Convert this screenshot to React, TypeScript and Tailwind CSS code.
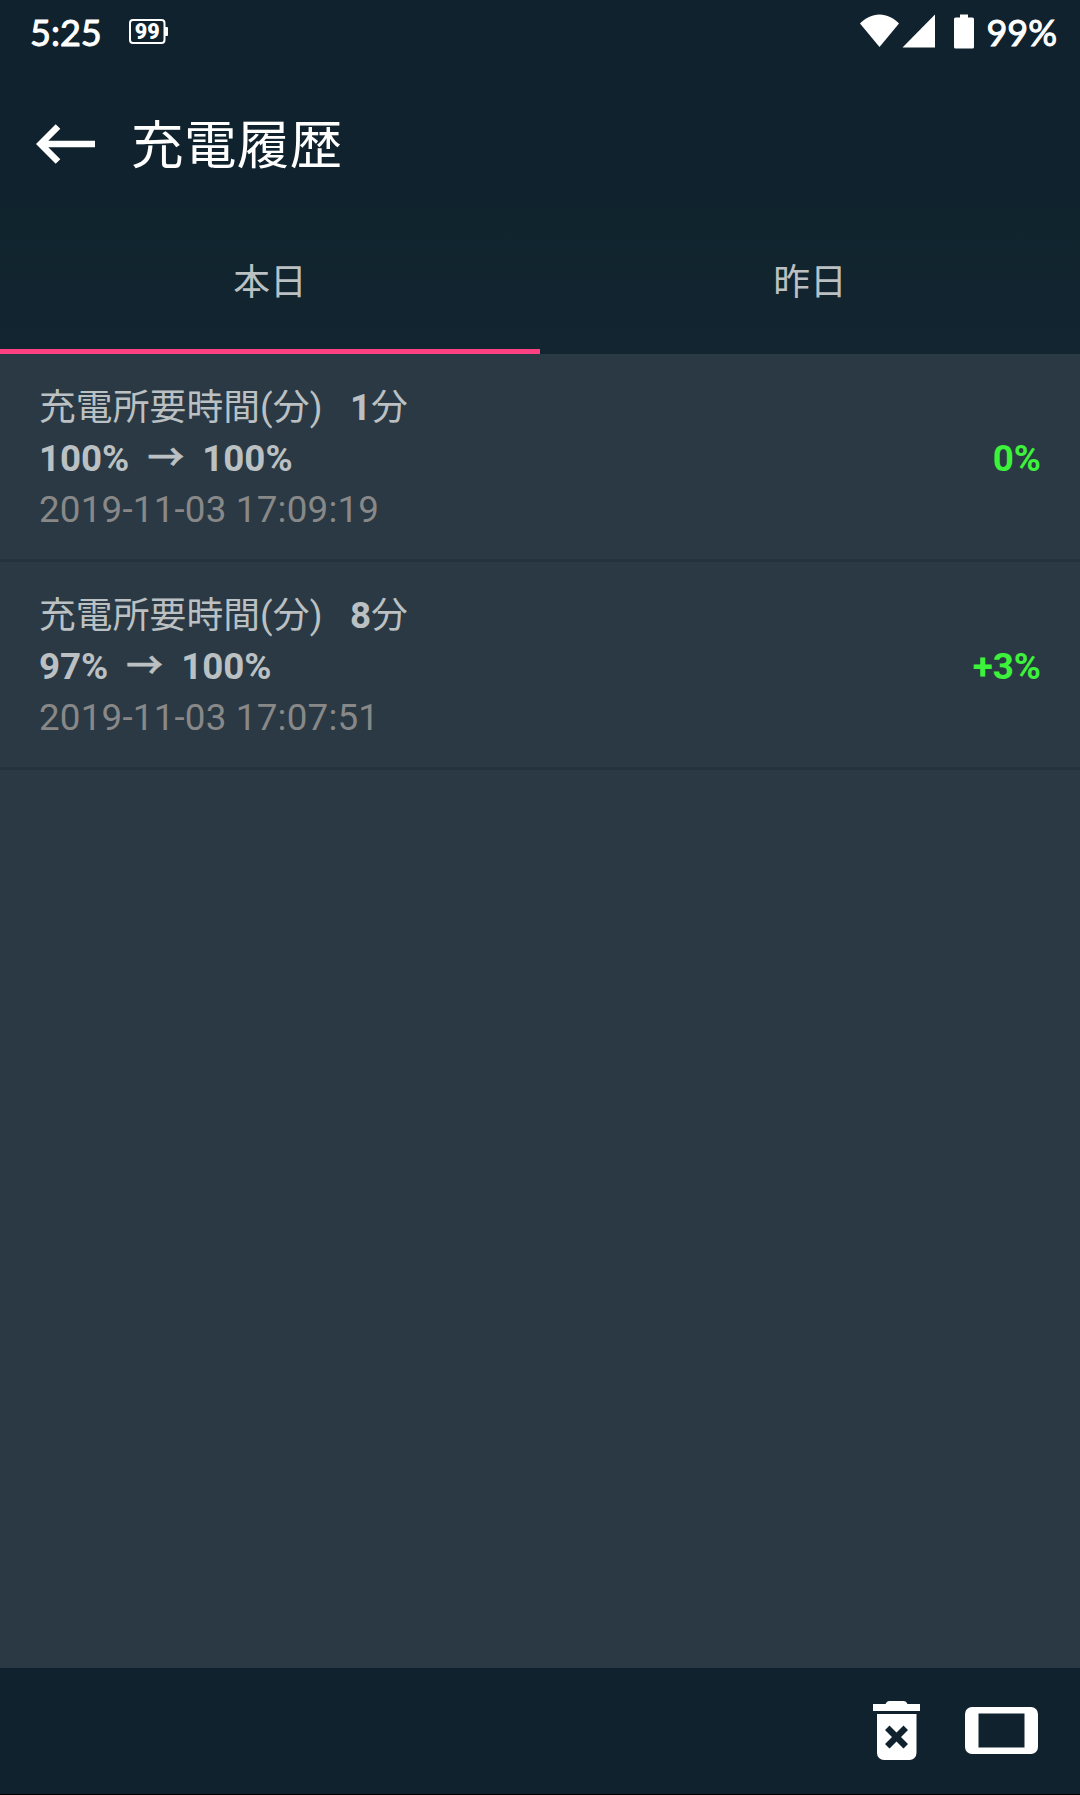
import React from "react";

type Charge = { minutes: string; from: string; to: string; at: string; gain: string };

const charges: Charge[] = [
  { minutes: "1", from: "100%", to: "100%", at: "2019-11-03 17:09:19", gain: "0%" },
  { minutes: "8", from: "97%", to: "100%", at: "2019-11-03 17:07:51", gain: "+3%" },
];

function StatusBar() {
  return (
    <div className="flex h-[63px] items-center justify-between pr-[23px] pl-[30px] font-['Lato',sans-serif] text-[36px] leading-[66px] font-normal text-white [-webkit-text-stroke:1px_white]">
      <div className="flex items-center">
        <span className="w-[99px]">5:25</span>
        <svg className="[-webkit-text-stroke:0]" width="39" height="36" viewBox="0 -5 39 36">
          <rect x="1" y="1" width="34.5" height="23" rx="3" fill="none" stroke="#fff" strokeWidth="2" />
          <rect x="35.500" y="8" width="3.500" height="9" rx="1" fill="#fff" />
          <text x="18.2" y="20" textAnchor="middle" fontFamily="Roboto, sans-serif" fontWeight="900" fontSize="21.5" fill="#fff">99</text>
        </svg>
      </div>
      <div className="flex items-center">
        <svg width="116" height="36" viewBox="0 0 116 36">
          <path d="M0 9.500C5.500 4 12 .500 19.500 .500S33.500 4 39 9.500L19.500 33Z" fill="#fff" />
          <path d="M75 .500V33.500H42.500Z" fill="#fff" />
          <path d="M100 .500h8v3h4.500a1.500 1.500 0 0 1 1.500 1.500v28a1.500 1.500 0 0 1-1.500 1.500h-17a1.500 1.500 0 0 1-1.500-1.500v-28a1.500 1.500 0 0 1 1.500-1.500h4.500z" fill="#fff" />
        </svg>
        <span className="ml-[10px]">99%</span>
      </div>
    </div>
  );
}

function Row({ c }: { c: Charge }) {
  return (
    <li className="flex h-[208px] items-center justify-between border-b-[3px] border-[#23333d] pt-1 pr-[39px] pl-[39px] text-[36.75px] leading-[51px] text-[#bbc0c3]">
      <div className="whitespace-pre">
        <p><span className="tracking-[0.1px]">充電所要時間(分)</span>{"   "}<b className="font-bold">{c.minutes}</b>分</p>
        <p className="font-bold tracking-[-0.05px]">{c.from}{"  "}<span className="font-medium [-webkit-text-stroke:0.7px_#bbc0c3]">→</span>{"  "}{c.to}</p>
        <p className="tracking-[0.2px] text-[#888888]">{c.at}</p>
      </div>
      <span className="font-bold text-[#3df23a]">{c.gain}</span>
    </li>
  );
}

export default function App() {
  return (
    <div lang="ja" className="flex h-[1795px] w-[1080px] flex-col bg-[#2a3943] font-['Roboto','Noto_Sans_CJK_JP',sans-serif]">
      <header className="bg-[#0f222d]">
        <StatusBar />
        <div className="flex h-[144px] items-center pl-[36px] text-white">
          <svg className="mt-[17px]" width="60" height="40" viewBox="0 0 60 40">
            <path d="M59 20H6M22 2.500L4.500 20L22 37.500" fill="none" stroke="#fff" strokeWidth="6.500" />
          </svg>
          <h1 className="ml-[35px] pt-[22px] text-[52.5px] leading-[62px] tracking-[0.4px]">充電履歴</h1>
        </div>
      </header>
      <nav className="grid h-[147px] grid-cols-2 bg-gradient-to-b from-[#10242e] to-[#132530] text-center text-[36.75px] leading-[151px] text-[#bbc0c3]">
        <div className="h-[147px] border-b-[5px] border-[#ff4081]">本日</div>
        <div>昨日</div>
      </nav>
      <ul className="grow">
        {charges.map((c) => (
          <Row key={c.at} c={c} />
        ))}
      </ul>
      <footer className="flex h-[127px] items-start justify-end gap-[45px] border-b border-black bg-[#0f222d] pt-[33px] pr-[42px]">
        <svg width="47" height="60" viewBox="0 0 47 60" fill="#fff">
          <path d="M0 3h12.500c1-2 2-3 4-3h14c2 0 3 1 4 3H47v7H0z" />
          <path fillRule="evenodd" d="M4 13h39.500v39a7 7 0 0 1-7 7h-25.500a7 7 0 0 1-7-7zM16.500 24.500l-4.500 4.500 7 7-7 7 4.500 4.500 7-7 7 7 4.500-4.500-7-7 7-7-4.500-4.500-7 7z" />
        </svg>
        <svg className="mt-[6px]" width="73" height="47" viewBox="0 0 73 47">
          <path fill="#fff" fillRule="evenodd" d="M7 0h59a7 7 0 0 1 7 7v33a7 7 0 0 1-7 7H7a7 7 0 0 1-7-7V7a7 7 0 0 1 7-7zM13.500 6.500v34h46v-34z" />
        </svg>
      </footer>
    </div>
  );
}
